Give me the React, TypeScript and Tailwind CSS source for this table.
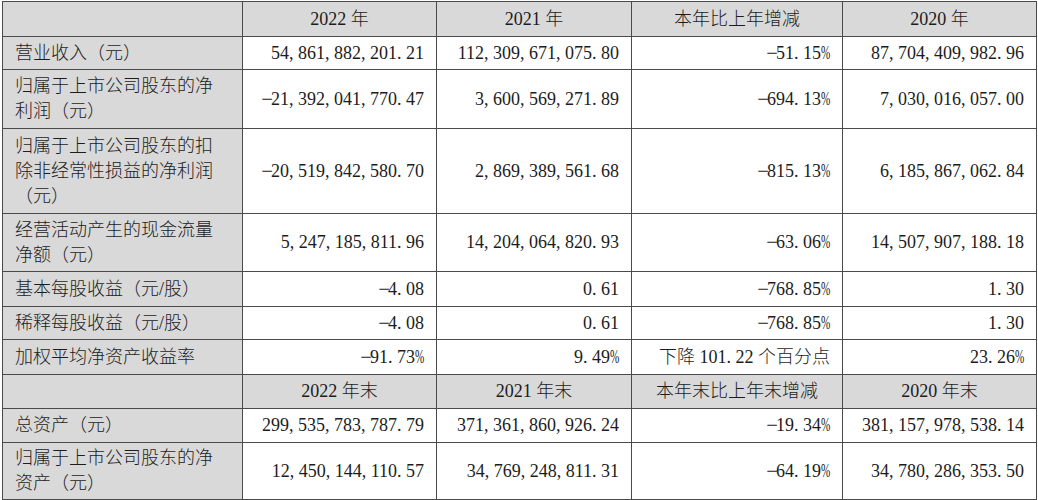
import React from "react";

const FONT = '"Liberation Serif", "Noto Sans CJK SC", serif';

function Num({ s }: { s: string }) {
  const parts: React.ReactNode[] = [];
  let buf = "";
  const flush = (k: string) => {
    if (buf) {
      parts.push(<span key={"t" + k}>{buf}</span>);
      buf = "";
    }
  };
  Array.from(s).forEach((ch, i) => {
    if (ch === "," || ch === ".") {
      flush(String(i));
      parts.push(
        <span key={i} className="inline-block w-[9px] text-left">
          {ch}
        </span>
      );
    } else if (ch === "-") {
      flush(String(i));
      parts.push(
        <span key={i} className="inline-block w-[9px] text-center">
          <span className="inline-block scale-x-[1.15]">−</span>
        </span>
      );
    } else if (ch === "%") {
      flush(String(i));
      parts.push(
        <span key={i} className="inline-block w-[9px] text-left">
          <span className="inline-block origin-left scale-x-[0.62]">%</span>
        </span>
      );
    } else {
      buf += ch;
    }
  });
  flush("end");
  return <>{parts}</>;
}

type Row = {
  label: string[];
  vals: string[];
  h: string;
};

const rows1: Row[] = [
  { label: ["营业收入（元）"], vals: ["54,861,882,201.21", "112,309,671,075.80", "-51.15%", "87,704,409,982.96"], h: "h-[33px]" },
  { label: ["归属于上市公司股东的净", "利润（元）"], vals: ["-21,392,041,770.47", "3,600,569,271.89", "-694.13%", "7,030,016,057.00"], h: "h-[59px]" },
  { label: ["归属于上市公司股东的扣", "除非经常性损益的净利润", "（元）"], vals: ["-20,519,842,580.70", "2,869,389,561.68", "-815.13%", "6,185,867,062.84"], h: "h-[85px]" },
  { label: ["经营活动产生的现金流量", "净额（元）"], vals: ["5,247,185,811.96", "14,204,064,820.93", "-63.06%", "14,507,907,188.18"], h: "h-[58px]" },
  { label: ["基本每股收益（元/股）"], vals: ["-4.08", "0.61", "-768.85%", "1.30"], h: "h-[35px]" },
  { label: ["稀释每股收益（元/股）"], vals: ["-4.08", "0.61", "-768.85%", "1.30"], h: "h-[33px]" },
];

const rows2: Row[] = [
  { label: ["总资产（元）"], vals: ["299,535,783,787.79", "371,361,860,926.24", "-19.34%", "381,157,978,538.14"], h: "h-[34px]" },
  { label: ["归属于上市公司股东的净", "资产（元）"], vals: ["12,450,144,110.57", "34,769,248,811.31", "-64.19%", "34,780,286,353.50"], h: "h-[57px]" },
];

const td = "border border-[#4a4a4a] align-middle leading-[25px]";
const labelTd = `${td} bg-[#d9d9d9] pl-[12px] pr-1 text-left`;
const numTd = `${td} bg-white pr-[12px] text-right whitespace-nowrap`;
const headTd = `${td} bg-[#d9d9d9] text-center whitespace-nowrap`;

function HeaderRow({ cols, h }: { cols: React.ReactNode[]; h: string }) {
  return (
    <tr className={h}>
      <td className={headTd}></td>
      {cols.map((c, i) => (
        <td key={i} className={headTd}>
          {c}
        </td>
      ))}
    </tr>
  );
}

function DataRow({ r }: { r: Row }) {
  return (
    <tr className={r.h}>
      <td className={labelTd}>
        {r.label.map((l, i) => (
          <div key={i}>{l}</div>
        ))}
      </td>
      {r.vals.map((v, i) => (
        <td key={i} className={numTd}>
          <Num s={v} />
        </td>
      ))}
    </tr>
  );
}

export default function App() {
  return (
    <div className="w-[1038px] h-[500px] bg-white overflow-hidden pt-[1px] pl-[2px]">
      <table
        className="table-fixed border-collapse text-[18px] font-light text-[#1c1c1c]"
        style={{ fontFamily: FONT }}
      >
        <colgroup>
          <col className="w-[240px]" />
          <col className="w-[194px]" />
          <col className="w-[195px]" />
          <col className="w-[211px]" />
          <col className="w-[194px]" />
        </colgroup>
        <tbody>
          <HeaderRow
            h="h-[35px]"
            cols={[
              <><Num s="2022" /> 年</>,
              <><Num s="2021" /> 年</>,
              <>本年比上年增减</>,
              <><Num s="2020" /> 年</>,
            ]}
          />
          {rows1.map((r, i) => (
            <DataRow key={i} r={r} />
          ))}
          <tr className="h-[35px]">
            <td className={labelTd}>加权平均净资产收益率</td>
            <td className={numTd}>
              <Num s="-91.73%" />
            </td>
            <td className={numTd}>
              <Num s="9.49%" />
            </td>
            <td className={numTd}>
              下降 <Num s="101.22" /> 个百分点
            </td>
            <td className={numTd}>
              <Num s="23.26%" />
            </td>
          </tr>
          <HeaderRow
            h="h-[34px]"
            cols={[
              <><Num s="2022" /> 年末</>,
              <><Num s="2021" /> 年末</>,
              <>本年末比上年末增减</>,
              <><Num s="2020" /> 年末</>,
            ]}
          />
          {rows2.map((r, i) => (
            <DataRow key={i} r={r} />
          ))}
        </tbody>
      </table>
    </div>
  );
}
